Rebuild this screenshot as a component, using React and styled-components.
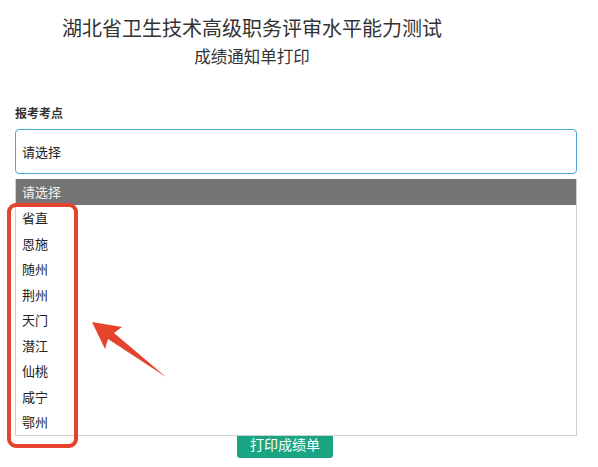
import React from "react";
import styled, { createGlobalStyle } from "styled-components";

const Global = createGlobalStyle`
  html, body { margin: 0; padding: 0; background: #fff; }
  body { font-family: "Noto Sans CJK SC", "Noto Sans", sans-serif; color: #333; }
`;

const Page = styled.div`
  position: relative;
  width: 598px;
  height: 467px;
  overflow: hidden;
`;

const Header = styled.header`
  padding: 15px 94px 0 0;
  text-align: center;
`;

const Title = styled.h1`
  margin: 0;
  font-size: 20px;
  line-height: 25px;
  font-weight: 400;
  color: #333;
`;

const Subtitle = styled.h2`
  margin: 6px 0 0;
  font-size: 16.5px;
  line-height: 20px;
  font-weight: 400;
  color: #333;
`;

const Form = styled.div`
  position: relative;
  padding: 39px 21px 0 15px;
`;

const Label = styled.label`
  display: block;
  font-size: 12px;
  line-height: 16px;
  font-weight: 700;
  color: #333;
`;

const SelectBox = styled.div`
  box-sizing: border-box;
  margin-top: 8px;
  height: 45px;
  border: 1px solid #4aa9d6;
  border-radius: 4px;
  padding: 0 6px;
  display: flex;
  align-items: center;
  font-size: 13px;
  color: #222;
`;

const Dropdown = styled.ul`
  position: absolute;
  left: 15px;
  top: 179px;
  width: 562px;
  box-sizing: border-box;
  margin: 0;
  padding: 0;
  list-style: none;
  background: #fff;
  border: 1px solid #cfcfcf;
  border-top: none;
  z-index: 2;
`;

const Option = styled.li`
  height: ${(p) => (p.$active ? "26px" : "25.5px")};
  line-height: ${(p) => (p.$active ? "26px" : "25.5px")};
  padding-left: 6px;
  font-size: 13px;
  color: ${(p) => (p.$active ? "#f2f2f2" : "#222")};
  background: ${(p) => (p.$active ? "#747474" : "transparent")};
`;

const ButtonRow = styled.div`
  margin-top: 250px;
  padding-left: 222px;
`;

const PrintButton = styled.button`
  width: 96px;
  height: 34px;
  border: none;
  border-radius: 3px;
  background: #19a583;
  color: #fff;
  font-family: inherit;
  font-size: 14px;
  padding: 6px 0 0;
  line-height: 16px;
`;

const Highlight = styled.div`
  position: absolute;
  left: 7px;
  top: 203px;
  width: 71px;
  height: 245px;
  box-sizing: border-box;
  border: 4px solid #e6432c;
  border-radius: 9px;
  z-index: 3;
`;

const Arrow = styled.svg`
  position: absolute;
  left: 85px;
  top: 315px;
  z-index: 3;
`;

const cities = ["省直", "恩施", "随州", "荆州", "天门", "潜江", "仙桃", "咸宁", "鄂州"];

export default function App() {
  return (
    <Page>
      <Global />
      <Header>
        <Title>湖北省卫生技术高级职务评审水平能力测试</Title>
        <Subtitle>成绩通知单打印</Subtitle>
      </Header>
      <Form>
        <Label>报考考点</Label>
        <SelectBox>请选择</SelectBox>
        <ButtonRow>
          <PrintButton>打印成绩单</PrintButton>
        </ButtonRow>
      </Form>
      <Dropdown>
        <Option $active>请选择</Option>
        {cities.map((c) => (
          <Option key={c}>{c}</Option>
        ))}
      </Dropdown>
      <Highlight />
      <Arrow width="90" height="70" viewBox="0 0 90 70">
        <polygon points="7,7 37,12 29,18 81,62 23,24 20,34" fill="#e6432c" />
      </Arrow>
    </Page>
  );
}
